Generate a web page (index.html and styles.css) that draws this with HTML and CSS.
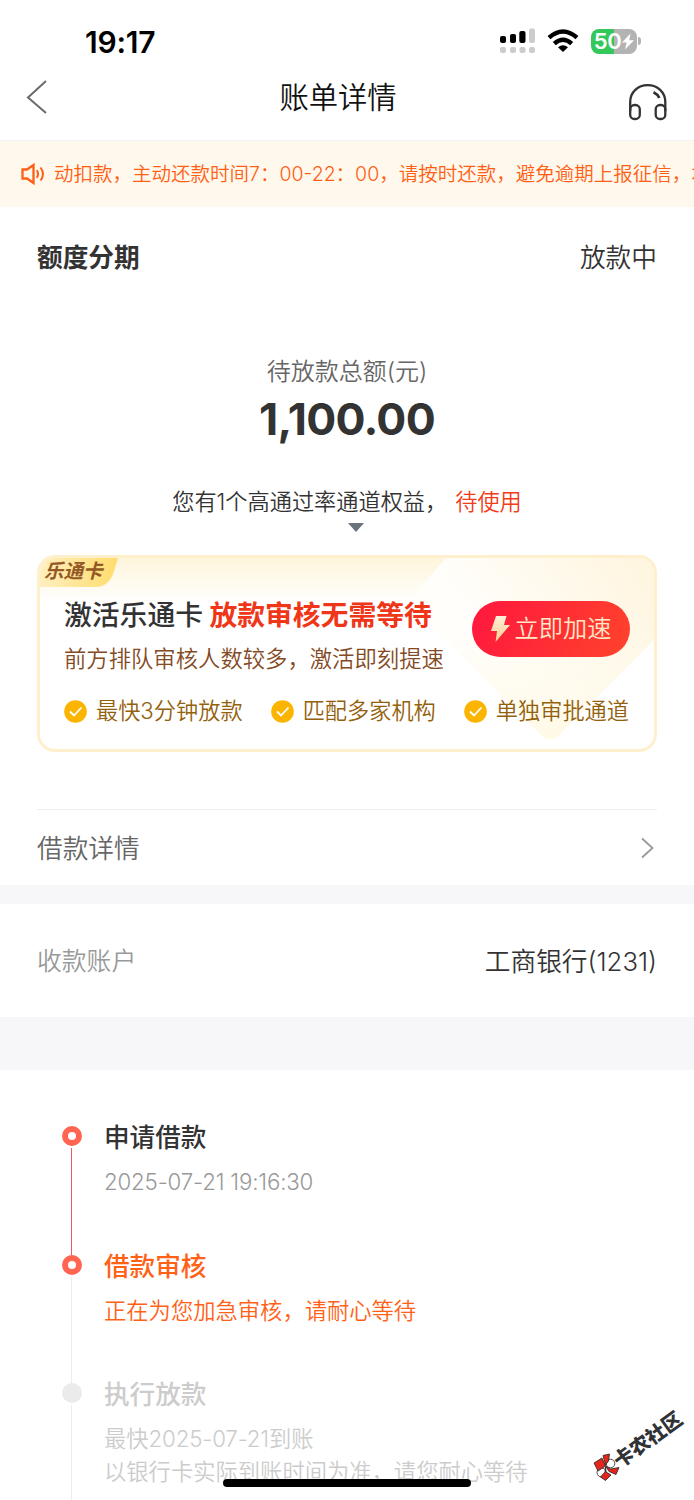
FILE: index.html
```html
<!DOCTYPE html>
<html lang="zh-CN">
<head>
<meta charset="utf-8">
<title>账单详情</title>
<link rel="stylesheet" href="styles.css">
</head>
<body>
<main class="screen">
  <header class="status-bar">
    <span class="time">19:17</span>
    <div class="status-icons">
      <svg class="signal" width="36" height="26" viewBox="0 0 36 26">
        <g fill="#000"><rect x="0" y="8" width="6" height="7" rx="2"/><rect x="10" y="6" width="6" height="9" rx="2"/><rect x="19.300" y="3" width="6.200" height="12" rx="2"/></g>
        <g fill="#ccc"><rect x="29" y="0.500" width="6" height="14.500" rx="2"/><rect x="0" y="19" width="6" height="6" rx="2"/><rect x="10" y="19" width="6" height="6" rx="2"/><rect x="19.500" y="19" width="6" height="6" rx="2"/><rect x="29" y="19" width="6" height="6" rx="2"/></g>
      </svg>
      <svg class="wifi" width="32" height="24" viewBox="0 0 32 24">
        <g fill="none" stroke="#000" stroke-width="4.400"><path d="M2 8.700Q16-3.700 30 8.700"/><path d="M7.300 14.700Q16 6.900 24.700 14.700"/></g>
        <path d="M11 18.200Q16 14.300 21 18.200L16 23Z"/>
      </svg>
      <div class="battery"><span>50</span><svg width="12" height="17" viewBox="0 0 12 16"><path fill="#fff" d="M8.500 0L0 9h4.700L3 16l9-9.300H7.200Z"/></svg></div>
      <i class="battery-cap"></i>
    </div>
  </header>
  <nav class="nav">
    <svg width="22" height="36" viewBox="0 0 22 36"><path d="M20 2L2 18.500 20 34" fill="none" stroke="#6b6b6b" stroke-width="2"/></svg>
    <h1>账单详情</h1>
    <svg class="headset" width="40" height="38" viewBox="0 0 40 38" fill="none" stroke="#333" stroke-width="2.300">
      <path d="M2.200 28V19C2.200 9 10 2.200 19.700 2.200S37.300 9 37.300 19V28"/>
      <rect x="2.200" y="22" width="9.600" height="14" rx="4.300"/><rect x="27.700" y="22" width="9.600" height="14" rx="4.300"/>
      <path d="M25.500 9.200Q29.500 11 31.300 15" stroke-width="2.800"/>
    </svg>
  </nav>
  <div class="notice">
    <svg width="24" height="22" viewBox="0 0 24 22" fill="none" stroke="#ff5f15" stroke-width="2.300"><path d="M1.500 6.500H6L12.500 2V20L6 15.500H1.500Z"/><path d="M15.800 7.300Q18.300 11 15.800 14.700M19.600 4.500Q24.300 11 19.600 17.500" stroke-width="2"/></svg>
    <p>动扣款，主动还款时间7：00-22：00，请按时还款，避免逾期上报征信，本</p>
  </div>
  <section class="summary">
    <div class="product"><h2>额度分期</h2><span>放款中</span></div>
    <p class="label">待放款总额(元)</p>
    <p class="amount">1,100.00</p>
    <p class="tip">您有1个高通过率通道权益，<b>待使用</b></p>
    <i class="arrow-down"></i>
    <article class="card">
      <svg class="card-art" width="614" height="191" viewBox="0 0 614 191">
        <defs>
          <linearGradient id="top" x1="0" y1="0" x2="0" y2="1"><stop stop-color="#fff5dc"/><stop offset="1" stop-color="#fff"/></linearGradient>
          <linearGradient id="gem" gradientUnits="userSpaceOnUse" x1="440" y1="80" x2="575" y2="-20"><stop stop-color="#fffefb"/><stop offset="1" stop-color="#fff6e1"/></linearGradient>
          <linearGradient id="tip" gradientUnits="userSpaceOnUse" x1="0" y1="70" x2="0" y2="184"><stop stop-color="#fffae9" stop-opacity="0"/><stop offset="1" stop-color="#fff9e6"/></linearGradient>
        </defs>
        <rect width="614" height="46" fill="url(#top)"/>
        <path d="M406 0H614V82L520 176Q510 187 500 176L378 54Q368 44 378 32Z" fill="url(#gem)"/>
        <path d="M394 70H614V82L520 176Q510 187 500 176Z" fill="url(#tip)"/>
      </svg>
      <span class="ribbon"><em>乐通卡</em></span>
      <div class="card-main">
        <div>
          <h3>激活乐通卡 <b>放款审核无需等待</b></h3>
          <p>前方排队审核人数较多，激活即刻提速</p>
        </div>
        <div class="boost"><svg width="19" height="26" viewBox="0 0 19 26"><defs><linearGradient id="bolt" x1="0" y1="0" x2="0" y2="1"><stop stop-color="#fff0d8"/><stop offset="1" stop-color="#ffd08e"/></linearGradient></defs><path fill="url(#bolt)" d="M5 0H15.500L13 9H19L4.500 26 6 15H0Z"/></svg><span>立即加速</span></div>
      </div>
      <ul class="features">
        <li><svg width="23" height="23" viewBox="0 0 23 23"><circle cx="11.500" cy="11.500" r="11.300" fill="#fbb400"/><path d="M6 11.500l4 4 7.500-8" fill="none" stroke="#fff" stroke-width="1.800"/></svg>最快3分钟放款</li>
        <li><svg width="23" height="23" viewBox="0 0 23 23"><circle cx="11.500" cy="11.500" r="11.300" fill="#fbb400"/><path d="M6 11.500l4 4 7.500-8" fill="none" stroke="#fff" stroke-width="1.800"/></svg>匹配多家机构</li>
        <li><svg width="23" height="23" viewBox="0 0 23 23"><circle cx="11.500" cy="11.500" r="11.300" fill="#fbb400"/><path d="M6 11.500l4 4 7.500-8" fill="none" stroke="#fff" stroke-width="1.800"/></svg>单独审批通道</li>
      </ul>
    </article>
    <div class="detail-row"><span>借款详情</span><svg width="15" height="22" viewBox="0 0 15 22"><path d="M2 1.500L12.500 11 2 20.500" fill="none" stroke="#999" stroke-width="1.800"/></svg></div>
  </section>
  <section class="account"><span>收款账户</span><strong>工商银行(1231)</strong></section>
  <ol class="timeline">
    <li class="step done"><i class="dot"></i><h4>申请借款</h4><p>2025-07-21 19:16:30</p></li>
    <li class="step current"><i class="dot"></i><h4>借款审核</h4><p>正在为您加急审核，请耐心等待</p></li>
    <li class="step pending"><i class="dot"></i><h4>执行放款</h4><p>最快<span class="date">2025-07-21</span>到账<br>以银行卡实际到账时间为准，请您耐心等待</p></li>
  </ol>
  <div class="home-bar"></div>
  <div class="watermark">
    <svg width="28" height="29" viewBox="0 0 28 29" stroke="#222" stroke-width=".8">
      <circle cx="17.500" cy="10.500" r="4.300" fill="#fff"/><circle cx="8.500" cy="19.500" r="4.500" fill="#fff"/>
      <g fill="#e3251b"><path d="M1 10L9 5l3.500 8L5 18Z"/><path d="M10 2.500L16.500 1l-1 7-3 4Z"/><path d="M12.500 13l5 3 8.500-1.500-3 7-7-3Z"/><path d="M12.500 14l.5 5 5 3-5.500 5.500L7.500 24l4.500-5Z"/></g>
    </svg>
    <span>卡农社区</span>
  </div>
</main>
</body>
</html>
```
FILE: styles.css
```css
* { box-sizing: border-box; margin: 0; padding: 0; }
body { background: #fff; color: #333; font-family: Inter, "Noto Sans CJK SC", sans-serif; font-weight: 350; }
svg { display: block; flex: none; }
ul, ol { list-style: none; }
.screen { position: relative; width: 694px; height: 1500px; overflow: hidden; white-space: nowrap; }

.status-bar { display: flex; justify-content: space-between; height: 70px; padding: 22px 53px 0 85px; }
.time { font-size: 30px; line-height: 40px; font-weight: 600; color: #000; letter-spacing: -.2px; }
.status-icons { display: flex; align-items: center; height: 38px; }
.wifi { margin-left: 11px; }
.battery { display: flex; align-items: center; justify-content: center; gap: 1px; width: 46px; height: 25px; margin-left: 12px; border-radius: 8px; background: linear-gradient(90deg, #34c759 50%, #b3b3b3 50%); color: #fff; font-size: 22px; line-height: 25px; font-weight: 600; letter-spacing: -.3px; }
.battery-cap { width: 3px; height: 8px; margin-left: 1px; border-radius: 0 4px 4px 0; background: #b3b3b3; }

.nav { display: flex; align-items: center; justify-content: space-between; height: 71px; padding: 0 26px 16px 26px; border-bottom: 1px solid #f3f3f3; }
.nav h1 { padding: 1px 0 0; font-size: 29.300px; line-height: 40px; font-weight: 350; color: #111; }
.headset { margin-top: 9px; }

.notice { display: flex; align-items: center; gap: 9px; height: 66px; padding-left: 21px; overflow: hidden; background: #fff8ec; color: #ff5f15; font-size: 19.500px; }
.notice p { padding-bottom: 3px; }

.summary { height: 678px; padding: 31px 37px 0; }
.product { display: flex; justify-content: space-between; height: 40px; font-size: 25.700px; line-height: 40px; }
.product h2 { font-size: 25.700px; font-weight: 700; }
.label { margin-top: 74px; text-align: center; font-size: 24px; line-height: 40px; color: #666; }
.amount { margin-top: 2px; text-align: center; font-size: 44.500px; line-height: 50px; font-weight: 700; letter-spacing: -.700px; }
.tip { margin-top: 38px; text-align: center; font-size: 22.200px; line-height: 40px; }
.tip b { margin-left: 8px; font-weight: 350; color: #f03c18; }
.arrow-down { display: block; width: 16px; height: 9px; margin: 1px 0 0 311px; background: #6a737b; clip-path: polygon(0 0, 100% 0, 50% 100%); }

.card { position: relative; height: 197px; margin-top: 23px; border: 3px solid #fff0cd; border-radius: 18px; overflow: hidden; background: #fff; }
.card-art { position: absolute; left: 0; top: 0; }
.ribbon { position: absolute; left: -3px; top: -3px; width: 82px; height: 32px; padding-left: 7px; background: linear-gradient(90deg, #fff0c2, #ffdc6b); clip-path: path("M0 0H82L76 19Q71 32 58 32H0Z"); color: #945825; font-size: 19.500px; line-height: 32px; font-weight: 700; }
.card-main { position: relative; display: flex; justify-content: space-between; padding: 37px 24px 0 24px; }
.card-main h3 { font-size: 27.800px; line-height: 40px; font-weight: 500; word-spacing: -1px; }
.card-main h3 b { font-weight: 700; color: #ef3618; }
.card-main p { margin-top: 6px; font-size: 22.350px; line-height: 36px; color: #844a24; }
.boost { display: flex; align-items: center; justify-content: center; gap: 5px; width: 158px; height: 56px; margin-top: 6px; border-radius: 28px; background: linear-gradient(115deg, #ff173e, #ff432c); color: #ffe8c8; font-size: 24.200px; }
.boost span { padding-bottom: 5px; }
.features { position: relative; display: flex; justify-content: space-between; padding: 16px 25px 0 24px; }
.features li { display: flex; align-items: center; gap: 9px; font-size: 22.200px; line-height: 36px; color: #93610c; }

.detail-row { display: flex; align-items: center; justify-content: space-between; height: 76px; margin-top: 57px; border-top: 1px solid #eee; color: #666; font-size: 25.700px; }
.detail-row span { padding-bottom: 2px; }
.detail-row svg { margin-right: 2px; }
.account { display: flex; align-items: center; justify-content: space-between; height: 185px; padding: 0 37px 3px; border-top: 19px solid #f7f7f9; border-bottom: 53px solid #f7f7f9; font-size: 25.700px; }
.account span { color: #999; font-size: 24.800px; }
.account strong { font-weight: 350; }

.timeline { padding: 48px 0 0 62px; }
.step { position: relative; height: 128.500px; padding-left: 42px; }
.step::after { content: ""; position: absolute; left: 9px; top: 30px; width: 1px; height: 107px; background: #ececec; }
.step.done::after { background: #ed5964; }
.dot { position: absolute; z-index: 1; left: 0; top: 8px; width: 20px; height: 20px; border: 6px solid #ff6550; border-radius: 50%; background: #fff; }
.step h4 { font-size: 25.600px; line-height: 40px; font-weight: 500; }
.step p { margin-top: 7px; font-size: 22.300px; line-height: 33px; color: #999; }
.done p, .date { letter-spacing: -.180px; }
.current h4, .current p { color: #ff6216; }
.pending .dot { border-color: #ebebeb; background: #ebebeb; }
.pending h4, .pending p { color: #ccc; }

.home-bar { position: absolute; left: 223px; top: 1479px; width: 248px; height: 8px; border-radius: 4px; background: #000; }
.watermark { position: absolute; left: 593px; top: 1453px; }
.watermark span { position: absolute; left: 23px; top: -2px; color: #303236; font-size: 19.800px; line-height: 24px; font-weight: 900; transform: rotate(-36deg); transform-origin: 0 50%; }
```
